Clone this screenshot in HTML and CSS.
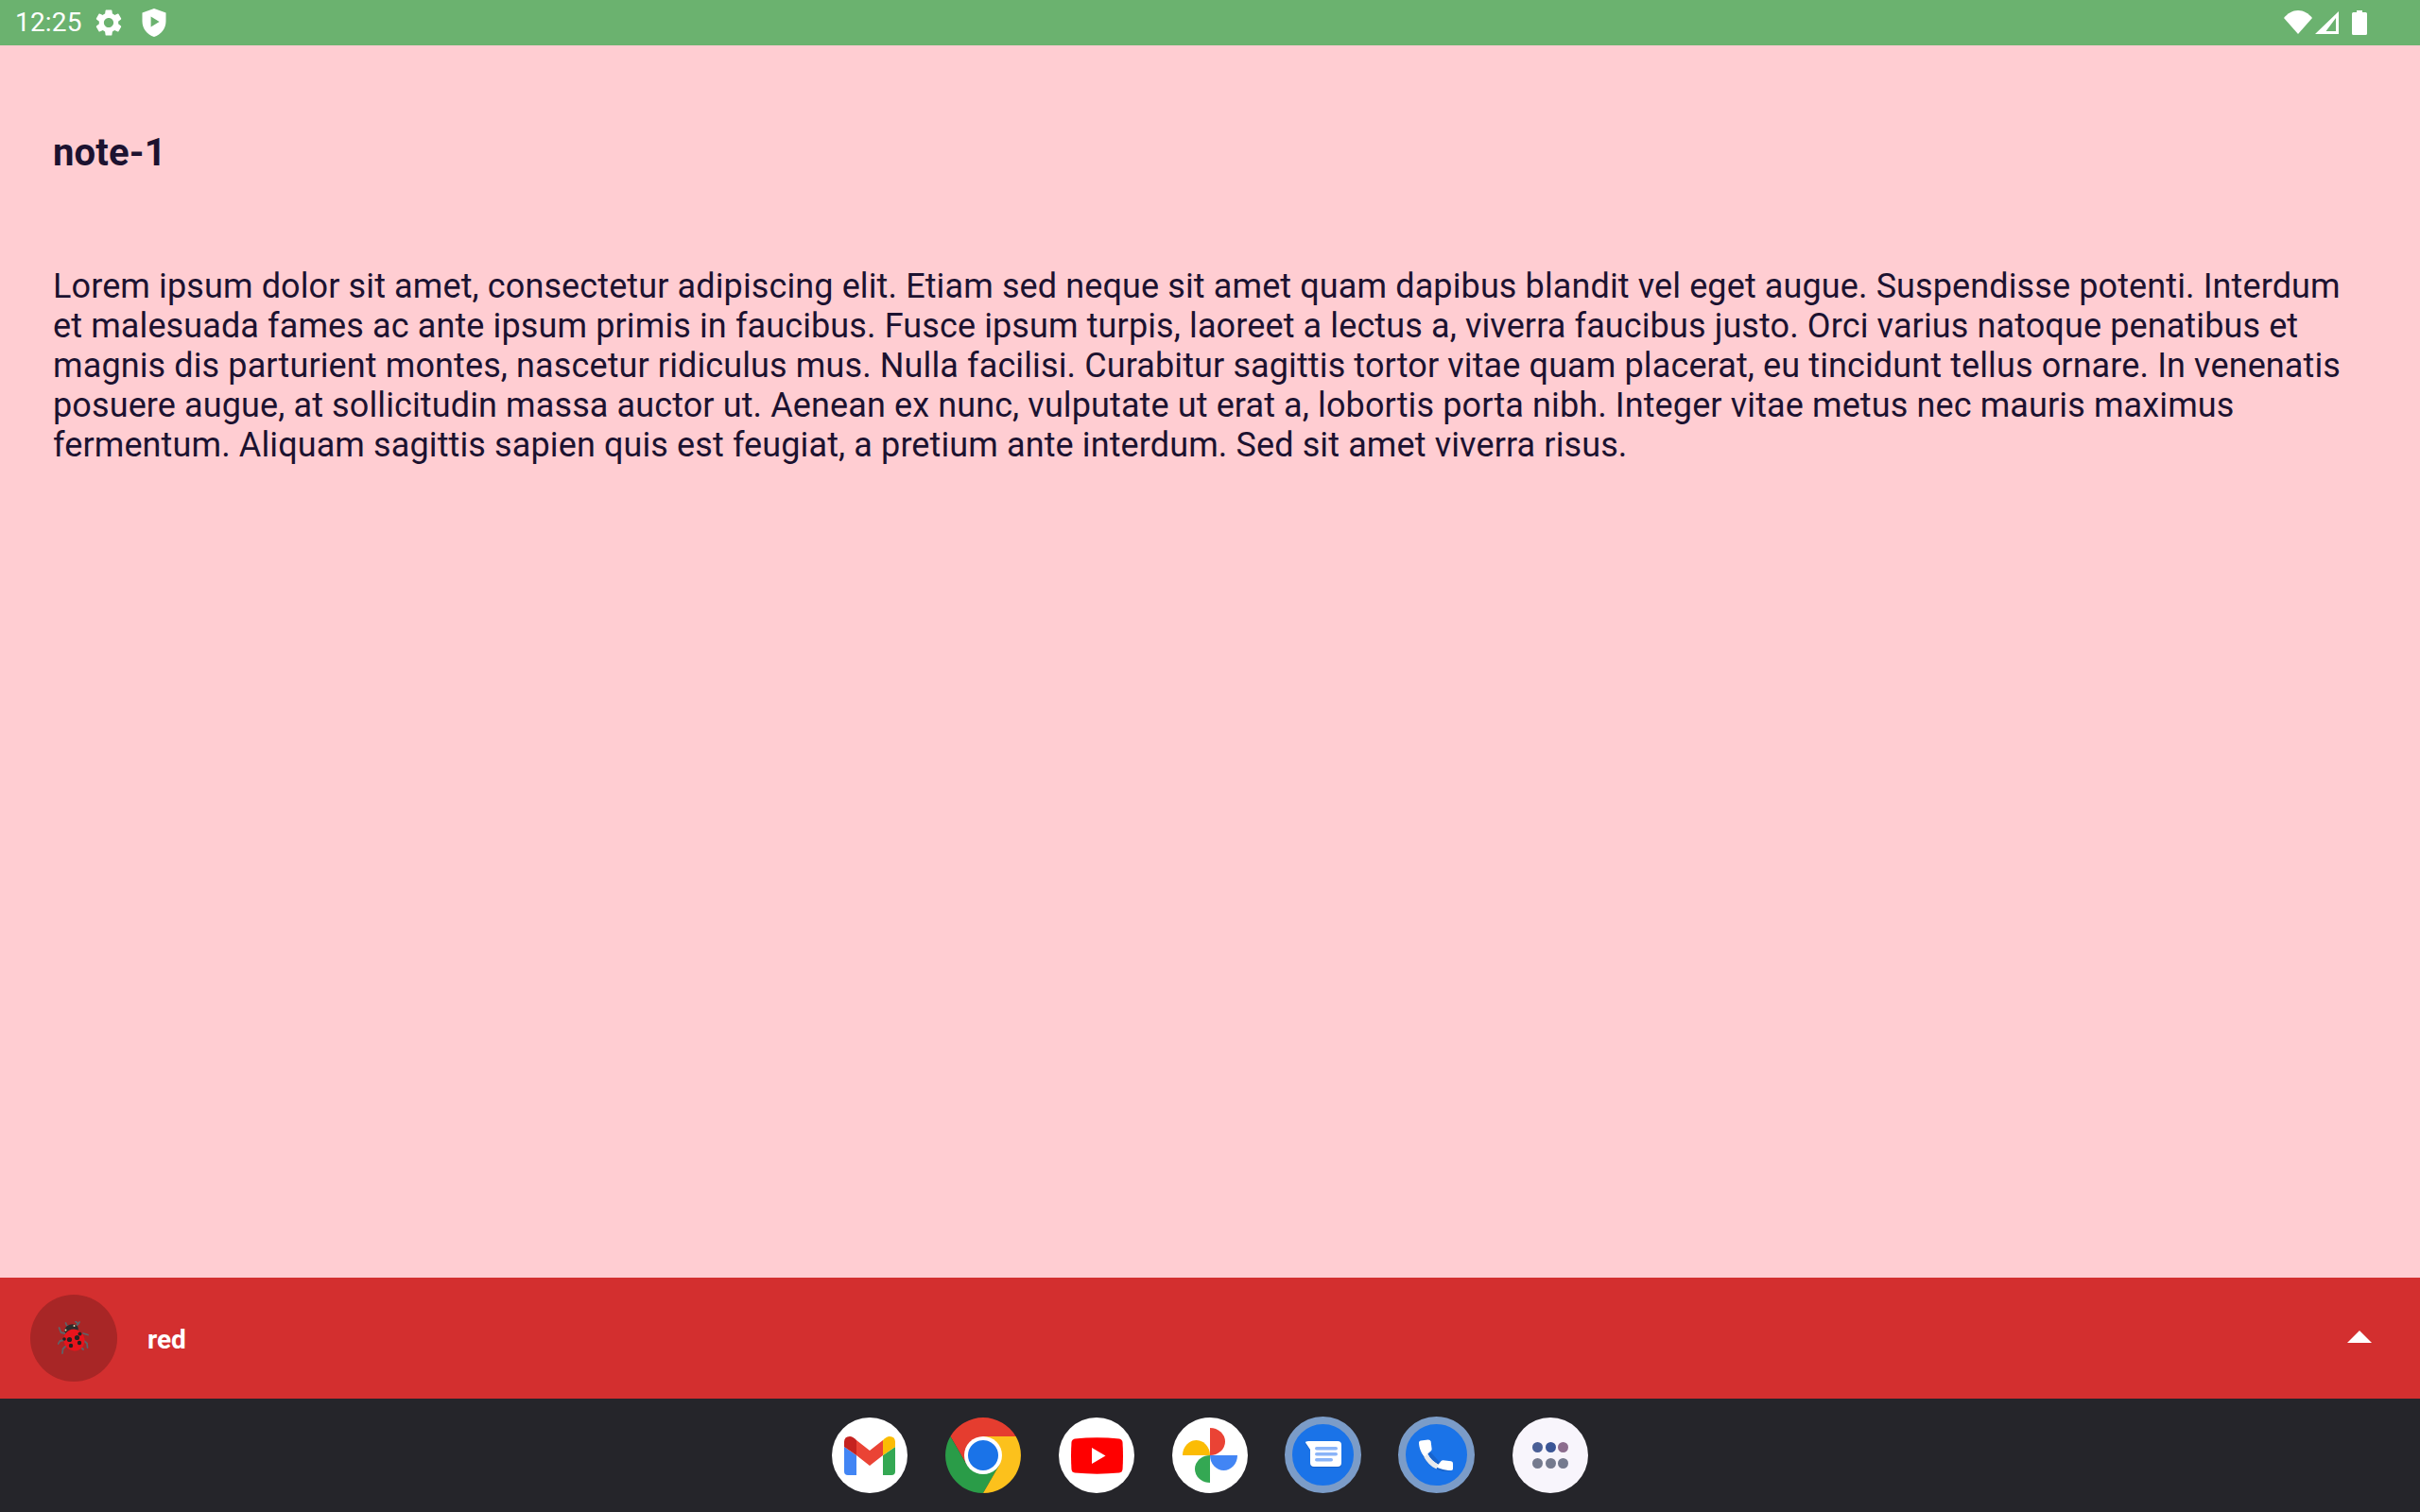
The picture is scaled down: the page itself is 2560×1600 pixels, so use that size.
FILE: index.html
```html
<!DOCTYPE html>
<html lang="en">
<head>
<meta charset="utf-8">
<title>note-1</title>
<link rel="stylesheet" href="styles.css">
</head>
<body>
<div class="app">
  <header class="status">
    <div class="status-left">
      <span class="time">12:25</span>
      <svg class="ico-gear" viewBox="0 0 24 24"><path fill="#fff" d="M19.14 12.94c.04-.3.06-.61.06-.94 0-.32-.02-.64-.07-.94l2.03-1.58a.49.49 0 0 0 .12-.61l-1.92-3.32a.488.488 0 0 0-.59-.22l-2.39.96c-.5-.38-1.03-.7-1.62-.94l-.36-2.54a.484.484 0 0 0-.48-.41h-3.84c-.24 0-.43.17-.47.41l-.36 2.54c-.59.24-1.13.57-1.62.94l-2.39-.96c-.22-.08-.47 0-.59.22L2.74 8.87c-.12.21-.08.47.12.61l2.03 1.58c-.05.3-.09.63-.09.94s.02.64.07.94l-2.03 1.58a.49.49 0 0 0-.12.61l1.92 3.32c.12.22.37.29.59.22l2.39-.96c.5.38 1.03.7 1.62.94l.36 2.54c.05.24.24.41.48.41h3.84c.24 0 .44-.17.47-.41l.36-2.54c.59-.24 1.13-.56 1.62-.94l2.39.96c.22.08.47 0 .59-.22l1.92-3.32c.12-.22.07-.47-.12-.61l-2.01-1.58zM12 15.6c-1.98 0-3.6-1.62-3.6-3.6s1.62-3.6 3.6-3.6 3.6 1.62 3.6 3.6-1.62 3.6-3.6 3.6z"/></svg>
      <svg class="ico-shield" viewBox="0 0 26 30"><path fill="#fff" fill-rule="evenodd" d="M13 0 25.5 4.6V13.5C25.500 21.200 20.400 27.600 13 30 5.600 27.600 .5 21.200 .5 13.500V4.600ZM9.600 8.600V19.400L18.600 14Z"/></svg>
    </div>
    <div class="status-right">
      <svg class="ico-wifi" viewBox="0 0 30 25"><path fill="#fff" d="M15 25 0 8C4 3 9.200 0 15 0S26 3 30 8Z"/></svg>
      <svg class="ico-signal" viewBox="0 0 25 24"><path fill="#fff" fill-rule="evenodd" d="M25 0V24H0ZM22 7 11.500 21H22Z"/></svg>
      <svg class="ico-battery" viewBox="0 0 16 26"><path fill="#fff" d="M5 0H11V2H14.500Q16 2 16 3.500V24.500Q16 26 14.500 26H1.500Q0 26 0 24.500V3.500Q0 2 1.500 2H5Z"/></svg>
    </div>
  </header>

  <main class="note">
    <h1 class="note-title">note-1</h1>
    <p class="note-body">Lorem ipsum dolor sit amet, consectetur adipiscing elit. Etiam sed neque sit amet quam dapibus blandit vel eget augue. Suspendisse potenti. Interdum<br>et malesuada fames ac ante ipsum primis in faucibus. Fusce ipsum turpis, laoreet a lectus a, viverra faucibus justo. Orci varius natoque penatibus et<br>magnis dis parturient montes, nascetur ridiculus mus. Nulla facilisi. Curabitur sagittis tortor vitae quam placerat, eu tincidunt tellus ornare. In venenatis<br>posuere augue, at sollicitudin massa auctor ut. Aenean ex nunc, vulputate ut erat a, lobortis porta nibh. Integer vitae metus nec mauris maximus<br>fermentum. Aliquam sagittis sapien quis est feugiat, a pretium ante interdum. Sed sit amet viverra risus.</p>
  </main>

  <section class="sheet">
    <div class="avatar">
      <svg class="ladybug" viewBox="0 0 34 36">
        <g fill="none" stroke="#5f6368" stroke-width="1.8" stroke-linecap="round" stroke-linejoin="round">
          <path d="M13 6 9.500 4.500 8.500 2"/><path d="M20 5 21 2 19 .5"/><path d="M21.500 3.500 23 1"/>
          <path d="M8 13 3.500 12 1.500 7"/><path d="M7 20 2.500 21 .5 24"/><path d="M9 26 5.500 29.500 5 34"/>
          <path d="M27 13 32 14.500"/><path d="M28 21 31 23.500 31.500 28"/><path d="M25 28 27 30"/>
        </g>
        <ellipse cx="14.500" cy="9" rx="7.500" ry="5.500" fill="#2b2b2b" transform="rotate(-18 14.500 9)"/>
        <circle cx="8.500" cy="9.500" r="1" fill="#e8d9b0"/><circle cx="17.500" cy="5" r="1" fill="#e8d9b0"/>
        <ellipse cx="17.500" cy="20" rx="11" ry="11.500" fill="#e8141c" transform="rotate(-28 17.500 20)"/>
        <g fill="#222">
          <circle cx="12.500" cy="19.500" r="2.600"/><circle cx="20.500" cy="17.500" r="2.600"/>
          <circle cx="23.500" cy="13.500" r="2"/><circle cx="7" cy="19" r="1.800"/>
          <circle cx="23" cy="23" r="2.200"/><circle cx="14" cy="26" r="2.200"/>
        </g>
      </svg>
    </div>
    <span class="sheet-label">red</span>
    <svg class="caret" viewBox="0 0 26 13"><path fill="#fff" d="M13 0 26 13H0Z"/></svg>
  </section>

  <nav class="dock">
    <div class="app-icon plain">
      <svg viewBox="0 0 54 41" class="i-gmail">
        <path fill="#4285f4" d="M0 11 13 20V41H4Q0 41 0 37Z"/>
        <path fill="#34a853" d="M54 11 41 20V41H50Q54 41 54 37Z"/>
        <path fill="#ea4335" d="M13 4 27 15 41 4V20L27 31 13 20Z"/>
        <path fill="#c5221f" d="M0 6Q0 0 6 0 9 0 13 4V20L0 11Z"/>
        <path fill="#fbbc04" d="M54 6Q54 0 48 0 45 0 41 4V20L54 11Z"/>
      </svg>
    </div>
    <div class="app-icon">
      <svg viewBox="0 0 80 80" class="i-full">
        <path fill="#e53d2f" d="M5.400 20A40 40 0 0 1 74.600 20H40L22.700 50Z"/>
        <path fill="#2a9c48" d="M5.400 20 22.700 50 57.300 50 40 80A40 40 0 0 1 5.400 20Z"/>
        <path fill="#fcc11c" d="M74.600 20A40 40 0 0 1 40 80L57.300 50 40 20Z"/>
        <circle cx="40" cy="40" r="20" fill="#fff"/>
        <circle cx="40" cy="40" r="16" fill="#1a73e8"/>
      </svg>
    </div>
    <div class="app-icon plain">
      <svg viewBox="0 0 55 39" class="i-yt">
        <path fill="#ff0000" d="M4 1.500Q27.500-.8 51 1.500 54 2 54.500 5 55.500 19.500 54.500 34 54 37 51 37.500 27.500 39.800 4 37.500 1 37 .5 34-.5 19.500 .5 5 1 2 4 1.500Z"/>
        <path fill="#fff" d="M22 11 36.500 19.500 22 28Z"/>
      </svg>
    </div>
    <div class="app-icon plain">
      <svg viewBox="0 0 58 58" class="i-photos">
        <path fill="#fbbc04" d="M0 29A14.500 16 0 0 1 29 29Z"/>
        <path fill="#ea4335" d="M29 0A16 14.500 0 0 1 29 29Z"/>
        <path fill="#4285f4" d="M58 29A14.500 16 0 0 1 29 29Z"/>
        <path fill="#34a853" d="M29 58A16 14.500 0 0 1 29 29Z"/>
      </svg>
    </div>
    <div class="app-icon ring">
      <svg viewBox="0 0 38 30" class="i-msg">
        <path fill="#174ea6" opacity=".45" d="M5 3H35Q38 3 38 6V25Q38 28 35 28H8Q5 28 5 25V10L0 3Z"/>
        <path fill="#fff" d="M3 0H34Q38 0 38 4V23Q38 27 34 27H9Q5 27 5 23V9L0 1.500Q0 0 3 0Z"/>
        <g fill="#8ab4f8"><rect x="10" y="6" width="24" height="3.600" rx="1.800"/><rect x="10" y="12" width="24" height="3.600" rx="1.800"/><rect x="10" y="18" width="19" height="3.600" rx="1.800"/></g>
      </svg>
    </div>
    <div class="app-icon ring">
      <svg viewBox="0 0 38 34" class="i-phone">
        <path fill="#174ea6" opacity=".4" d="M1 5C1 21 16 35 32 35L38 31 22 24 14 15Z"/>
        <path fill="#fff" d="M2 1 10 0Q12.500 0 13 2L14 10Q14.200 11.500 13 12.500L9.500 15.500C12 20.500 16 24.500 21 27L24 23.500Q25 22.300 26.500 22.500L35 23.500Q37 24 37 26V32Q37 33.500 35 33.500C16 33.500 0 18 0 3Q0 1.300 2 1Z"/>
        <path fill="#e8eaed" d="M9.500 15.500C12 20.500 16 24.500 21 27L19 32C13 29 8.500 24.500 5.500 19Z"/>
      </svg>
    </div>
    <div class="app-icon plain apps">
      <div class="dots">
        <i class="dot d1"></i><i class="dot d2"></i><i class="dot d3"></i>
        <i class="dot d4"></i><i class="dot d4"></i><i class="dot d4"></i>
      </div>
    </div>
  </nav>
</div>
</body>
</html>
```

FILE: styles.css
```css
* { box-sizing: border-box; }
html, body { margin: 0; height: 100%; }
body { font-family: Roboto, "Noto Sans", sans-serif; background: #ffcdd2; }
.app { width: 2560px; height: 1600px; display: flex; flex-direction: column; overflow: hidden; }

.status { height: 48px; background: #6bb26f; display: flex; align-items: center; justify-content: space-between; padding: 0 56px 0 16px; flex: none; }
.status-left, .status-right { display: flex; align-items: center; }
.time { color: #fff; font-size: 28px; line-height: 48px; width: 82px; font-weight: 400; letter-spacing: .2px; }
.ico-gear { width: 34px; height: 34px; }
.ico-shield { width: 26px; height: 30px; margin-left: 18px; }
.ico-wifi { width: 30px; height: 25px; margin-bottom: 1px; }
.ico-signal { width: 25px; height: 24px; margin-left: 3px; }
.ico-battery { width: 16px; height: 26px; margin-left: 14px; margin-bottom: 1px; }

.note { flex: 1; background: #ffcdd2; padding: 88px 56px 0; color: #1c1230; }
.note-title { margin: 0; font-size: 40px; line-height: 52px; font-weight: 700; letter-spacing: .15px; }
.note-body { margin: 94px 0 0; font-size: 36px; line-height: 42px; font-weight: 400; letter-spacing: .115px; white-space: nowrap; }

.sheet { height: 128px; flex: none; background: #d32f2f; display: flex; align-items: center; padding: 0 51px 0 32px; }
.avatar { width: 92px; height: 92px; border-radius: 50%; background: #a82626; display: flex; align-items: center; justify-content: center; flex: none; }
.ladybug { width: 34px; height: 36px; }
.sheet-label { margin-left: 32px; padding-top: 3px; color: #fff; font-weight: 700; font-size: 28px; line-height: 32px; flex: 1; }
.caret { width: 26px; height: 13px; margin-bottom: 3px; }

.dock { height: 120px; flex: none; background: #25252a; display: flex; align-items: center; justify-content: center; gap: 40px; }
.app-icon { width: 80px; height: 80px; border-radius: 50%; display: flex; align-items: center; justify-content: center; flex: none; }
.plain { background: #fff; }
.ring { background: #1a73e8; border: 8.5px solid #7b9cc8; width: 81px; height: 81px; margin: -1px 0 0 -1px; }
.apps { background: #f8f5fc; }
.i-full { width: 80px; height: 80px; }
.i-gmail { width: 54px; height: 41px; }
.i-yt { width: 55px; height: 39px; }
.i-photos { width: 58px; height: 58px; }
.i-msg { width: 38px; height: 30px; }
.i-phone { width: 37px; height: 34px; }
.dots { display: grid; grid-template-columns: repeat(3, 11px); gap: 5.3px 2.3px; }
.dot { width: 11px; height: 11px; border-radius: 50%; display: block; }
.d1 { background: #4a5f96; }
.d2 { background: #3a5596; }
.d3 { background: #8c6c8e; }
.d4 { background: #757a8e; }
```
